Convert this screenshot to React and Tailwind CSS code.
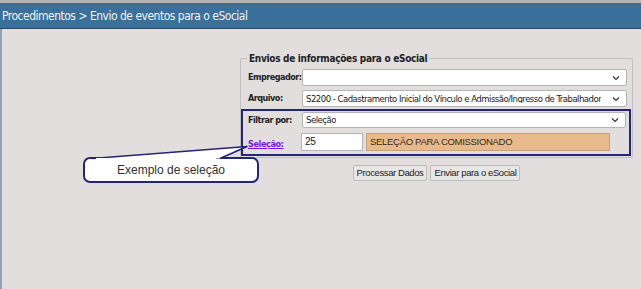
import React from 'react';

// small chevron used at the right edge of the selects
const Chevron = () => (
  <svg width="8" height="6" viewBox="0 0 8 6" className="shrink-0">
    <path d="M1 1.5 L4 4.5 L7 1.5" fill="none" stroke="#333" strokeWidth="1.2" />
  </svg>
);

const FakeSelect = ({ value, className = '' }) => (
  <div
    className={`bg-white border border-[#b5b5b5] rounded-[2px] flex items-center justify-between pl-[3px] pr-[6px] ${className}`}
  >
    <span className="text-[9.5px] leading-none text-[#1a1a1a] tracking-[-0.52px] whitespace-nowrap overflow-hidden" style={{ fontFamily: '"DejaVu Sans Condensed", "DejaVu Sans", sans-serif' }}>
      {value}
    </span>
    <Chevron />
  </div>
);

const Label = ({ children }) => (
  <div className="w-[54px] shrink-0 whitespace-nowrap text-[9px] leading-none font-bold text-[#222] tracking-[-0.5px]" style={{ fontFamily: '"DejaVu Sans Condensed", "DejaVu Sans", sans-serif' }}>
    {children}
  </div>
);

export default function App() {
  return (
    <div className="w-[641px] h-[289px] bg-[#e1dedd] relative overflow-hidden flex flex-col" style={{ fontFamily: '"Liberation Sans", Arial, sans-serif' }}>
      <div className="h-[3px] bg-[#b4b4b4] shrink-0" />
      <div
        className="h-[26px] shrink-0 bg-[#3a7099] border-b border-[#2a485e] flex items-center px-[2px] text-[12px] text-[#eef3f7] tracking-[-0.5px]"
        style={{ fontFamily: '"DejaVu Sans Condensed", "DejaVu Sans", sans-serif' }}
      >
        Procedimentos &gt; Envio de eventos para o eSocial
      </div>

      <div className="flex-1 border-l-2 border-[#8ea3b3] pt-[22px] pl-[238px]">
        <fieldset className="w-[393px] border border-[#c2c0bf] rounded-[2px] pb-[1px] pr-[1px]">
          <legend
            className="ml-[6px] px-[2px] text-[10px] font-bold text-[#222] tracking-[-0.3px]"
            style={{ fontFamily: '"DejaVu Sans Condensed", "DejaVu Sans", sans-serif' }}
          >
            Envios de informações para o eSocial
          </legend>

          <div className="flex items-center pl-[7px] mt-[3px]">
            <Label>Empregador:</Label>
            <FakeSelect value="" className="w-[325px] h-[17px]" />
          </div>
          <div className="flex items-center pl-[7px] mt-[4px]">
            <Label>Arquivo:</Label>
            <FakeSelect
              value="S2200 - Cadastramento Inicial do Vínculo e Admissão/Ingresso de Trabalhador"
              className="w-[325px] h-[17px]"
            />
          </div>

          <div className="mt-[2px] border-2 border-[#24247a] pl-[5px] pt-[1px] pb-[3px]">
            <div className="flex items-center">
              <Label>Filtrar por:</Label>
              <FakeSelect value="Seleção" className="w-[324px] h-[16px]" />
            </div>
            <div className="flex items-center mt-[5px]">
              <div className="w-[53px] shrink-0 leading-none">
                <a
                  href="#"
                  className="text-[9px] font-bold text-[#7b14f0] underline tracking-[-0.4px]"
                  style={{ fontFamily: '"DejaVu Sans Condensed", "DejaVu Sans", sans-serif' }}
                >
                  Seleção:
                </a>
              </div>
              <div className="w-[62px] h-[18px] bg-white border border-[#b5b5b5] flex items-center pl-[3px] text-[10px] leading-none text-[#1a1a1a] tracking-[-0.4px]">
                25
              </div>
              <div className="ml-[3px] w-[244px] h-[18px] bg-[#e8b98a] border border-[#c9a27c] flex items-center pl-[3px] text-[9.5px] leading-none text-[#3a2a1a] tracking-[-0.3px]">
                SELEÇÃO PARA COMISSIONADO
              </div>
            </div>
          </div>
        </fieldset>

        <div className="w-[393px] flex justify-center gap-[3px] mt-[7px]">
          <button className="h-[16px] px-[3px] bg-[#e8e6e5] border border-[#bdbbba] rounded-[2px] text-[9.5px] text-[#222] tracking-[-0.4px] leading-none">
            Processar Dados
          </button>
          <button className="h-[16px] px-[3px] bg-[#e8e6e5] border border-[#bdbbba] rounded-[2px] text-[9.5px] text-[#222] tracking-[-0.4px] leading-none">
            Enviar para o eSocial
          </button>
        </div>
      </div>

      {/* callout over the page */}
      <div className="absolute left-[83px] top-[157px] w-[176px] h-[26px] bg-white border-2 border-[#24247a] rounded-[7px] flex items-center justify-center text-[12px] text-[#333]">
        Exemplo de seleção
      </div>
      <svg className="absolute left-0 top-0 pointer-events-none" width="641" height="289">
        <path d="M92 158.5 L247 146.5 L220 158.5" fill="white" stroke="#24247a" strokeWidth="1.6" strokeLinejoin="round" />
        <rect x="96" y="158" width="120" height="3" fill="white" />
      </svg>
    </div>
  );
}
